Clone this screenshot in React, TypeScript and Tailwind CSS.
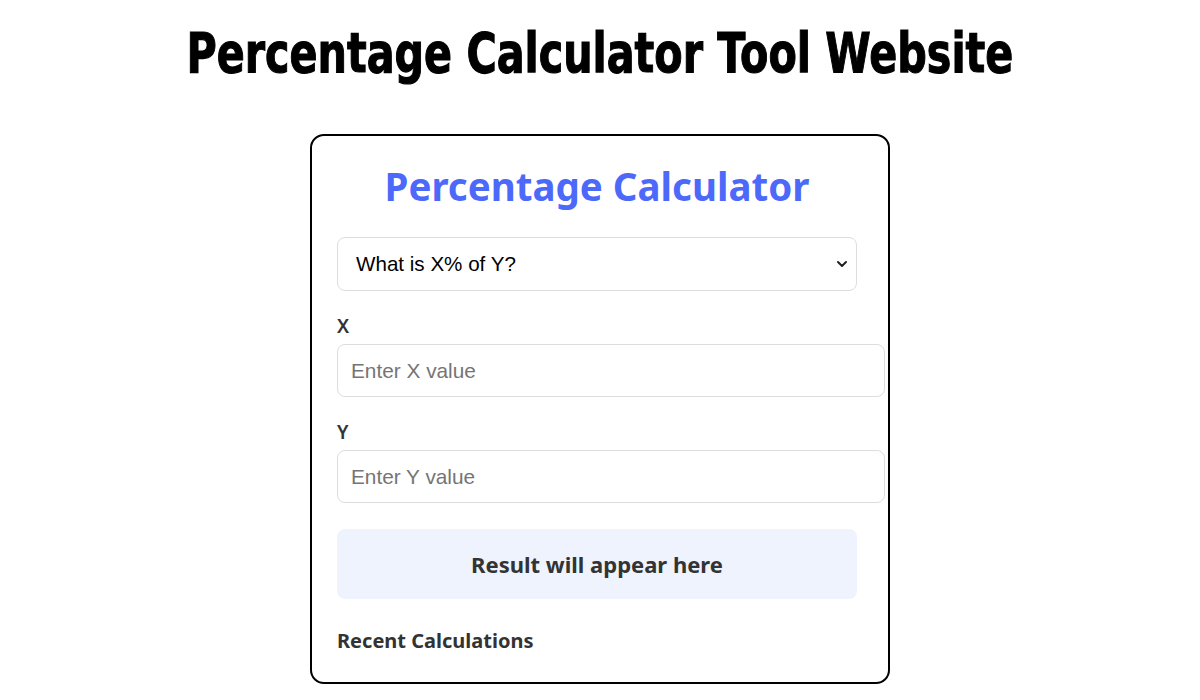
import { useState } from "react"

// Percentage calculator page

const bodyFont = "font-['Segoe_UI','Noto_Sans','Open_Sans',sans-serif]"
const fieldFont = "font-['Liberation_Sans',Arial,sans-serif]"

export default function App() {
  const [mode, setMode] = useState("of")
  const [x, setX] = useState("")
  const [y, setY] = useState("")

  return (
    <div className="min-h-screen bg-white">
      <h1 className="pt-[25px] text-center text-[56px] leading-[56px] font-bold text-black font-['DejaVu_Sans',sans-serif] [-webkit-text-stroke:1.2px_black]">
        <span className="inline-block origin-center scale-x-[0.737] whitespace-nowrap">
          Percentage Calculator Tool Website
        </span>
      </h1>

      <div className="mx-auto mt-[53px] w-[580px] rounded-[14px] border-2 border-black bg-white pl-[25px] pr-[31px] pt-[28px] pb-[27px]">
        <div className={`w-[520px] ${bodyFont}`}>
          <h2 className="text-center text-[38.5px] leading-[44px] font-bold text-[#4d69fa]">
            Percentage Calculator
          </h2>

          {/* 계산 방식 */}
          <div className="relative mt-[29px]">
            <select
              value={mode}
              onChange={(e) => setMode(e.target.value)}
              className={`h-[54px] w-[520px] appearance-none rounded-[8px] border border-[#dddddd] bg-white pl-[18px] text-[20.6px] text-black outline-none ${fieldFont}`}
            >
              <option value="of">What is X% of Y?</option>
              <option value="is">X is what % of Y?</option>
              <option value="change">% change from X to Y</option>
            </select>
            <svg
              className="pointer-events-none absolute right-[9px] top-[23px]"
              width="12"
              height="8"
              viewBox="0 0 12 8"
              fill="none"
            >
              <path d="M2 2l4 4 4-4" stroke="#222" strokeWidth="2" strokeLinecap="round" strokeLinejoin="round" />
            </svg>
          </div>

          <label className="mt-[23px] block text-[19px] leading-[24px] font-semibold text-[#333]">X</label>
          <input
            value={x}
            onChange={(e) => setX(e.target.value)}
            placeholder="Enter X value"
            className={`mt-[6px] block h-[53px] w-[548px] rounded-[8px] border border-[#dddddd] px-[13px] text-[20.8px] text-black outline-none placeholder:text-[#757575] ${fieldFont}`}
          />

          <label className="mt-[23px] block text-[19px] leading-[24px] font-semibold text-[#333]">Y</label>
          <input
            value={y}
            onChange={(e) => setY(e.target.value)}
            placeholder="Enter Y value"
            className={`mt-[6px] block h-[53px] w-[548px] rounded-[8px] border border-[#dddddd] px-[13px] text-[20.8px] text-black outline-none placeholder:text-[#757575] ${fieldFont}`}
          />

          <div className="mt-[26px] flex h-[70px] items-center justify-center rounded-[8px] bg-[#eef3fe] text-[22px] font-bold text-[#333]">
            Result will appear here
          </div>

          <h3 className="mt-[28px] text-[20px] leading-[28px] font-bold text-[#333]">Recent Calculations</h3>
        </div>
      </div>
    </div>
  )
}
